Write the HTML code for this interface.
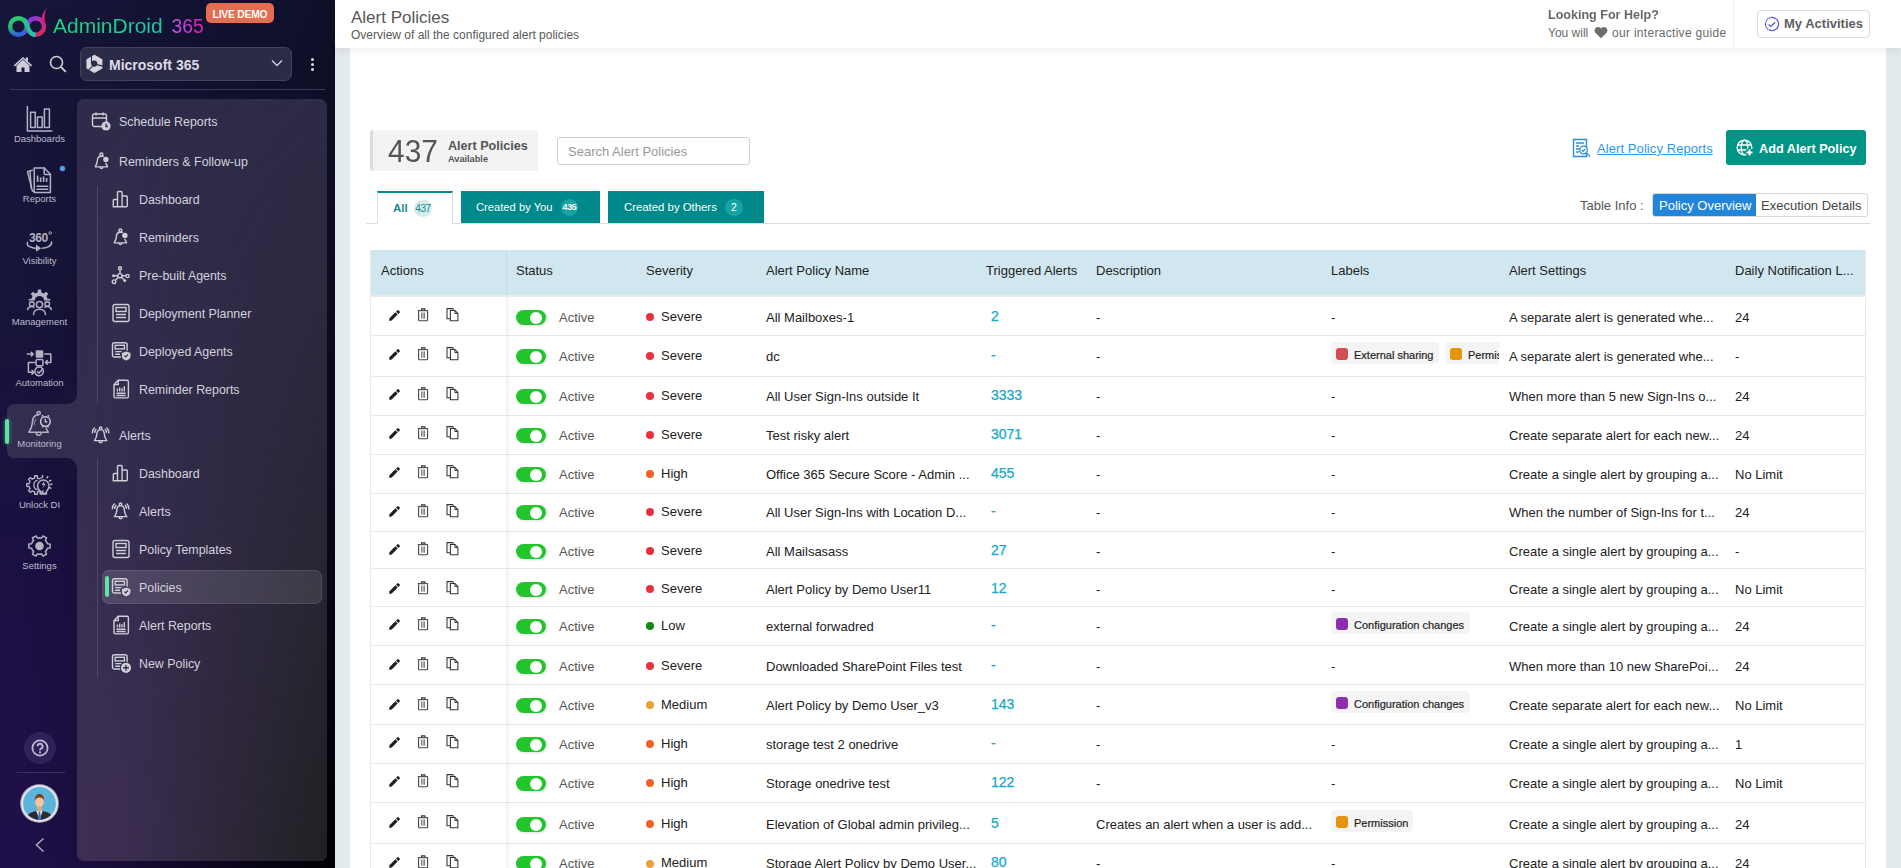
<!DOCTYPE html><html><head><meta charset="utf-8"><style>
*{box-sizing:border-box;margin:0;padding:0}
html,body{width:1901px;height:868px;overflow:hidden}
body{position:relative;font-family:"Liberation Sans",sans-serif;background:#e3eaee;color:#222}
.abs{position:absolute}
svg{display:block}
#side{position:absolute;left:0;top:0;width:335px;height:868px;overflow:hidden;
 background:linear-gradient(180deg,#15163a 0%,#171439 35%,#1b1042 65%,#20104a 100%)}
#sideshade{position:absolute;left:0;top:0;width:335px;height:868px;background:linear-gradient(90deg,rgba(0,0,0,0) 0%,rgba(0,0,0,0) 8%,rgba(0,0,0,.5) 60%,rgba(0,0,0,.97) 100%);
 -webkit-mask-image:linear-gradient(180deg,rgba(0,0,0,.3) 0%,rgba(0,0,0,.55) 50%,rgba(0,0,0,1) 100%);mask-image:linear-gradient(180deg,rgba(0,0,0,.3) 0%,rgba(0,0,0,.55) 50%,rgba(0,0,0,1) 100%)}
#panel{position:absolute;left:77px;top:99px;width:250px;height:762px;border-radius:7px;overflow:hidden;
 background:linear-gradient(180deg,#2f2c4b 0%,#362e52 50%,#3e2f56 100%)}
#panelshade{position:absolute;left:0;top:0;width:250px;height:762px;background:linear-gradient(90deg,rgba(32,32,33,0) 0%,rgba(32,32,33,.15) 25%,rgba(32,32,33,1) 100%);
 -webkit-mask-image:linear-gradient(180deg,rgba(0,0,0,.12) 0%,rgba(0,0,0,.55) 50%,rgba(0,0,0,1) 100%);mask-image:linear-gradient(180deg,rgba(0,0,0,.12) 0%,rgba(0,0,0,.55) 50%,rgba(0,0,0,1) 100%)}
.rl{position:absolute;width:77px;text-align:center;font-size:9.5px;line-height:11px;color:#bdbccb;white-space:nowrap}
.ri{position:absolute;display:flex;justify-content:center;width:77px}
.sm{position:absolute;font-size:12.4px;color:#d4d2de;white-space:nowrap;line-height:14px}
.si{position:absolute;width:20px;height:20px}
.hdr{position:absolute;left:335px;top:0;width:1566px;height:48px;background:#fff;border-bottom-left-radius:3px;box-shadow:0 3px 9px rgba(0,0,0,.065)}
#main{position:absolute;left:350px;top:48px;width:1536px;height:820px;background:#fff}
.row{position:absolute;left:370px;width:1496px;border-bottom:1px solid #e8e8e8;box-shadow:inset 1px 0 #e6ecee,inset -1px 0 #e6ecee;background:#fff}
.c{position:absolute;white-space:nowrap;font-size:13px;line-height:15px}
</style></head><body>
<div id="side"><div id="sideshade"></div><div id="panel"><div id="panelshade"></div></div><div class="abs" style="left:7px;top:404px;width:80px;height:54px;border-radius:7px 0 0 7px;background:#332d50"></div><div class="abs" style="left:67px;top:394px;width:10px;height:10px;background:#332d50"></div><div class="abs" style="left:57px;top:384px;width:20px;height:20px;border-radius:0 0 10px 0;background:#171339"></div><div class="abs" style="left:67px;top:458px;width:10px;height:10px;background:#332d50"></div><div class="abs" style="left:57px;top:458px;width:20px;height:20px;border-radius:0 10px 0 0;background:#181239"></div><div class="abs" style="left:5px;top:419px;width:4px;height:25px;border-radius:2px;background:#5fe3a1;box-shadow:0 0 4px rgba(95,227,161,.6)"></div><svg width="56" height="40" viewBox="0 0 56 40" class="abs" style="left:0;top:0">
<defs><linearGradient id="lg1" x1="0" y1="0" x2="0.3" y2="1"><stop offset="0" stop-color="#2fd06a"/><stop offset=".55" stop-color="#21b873"/><stop offset="1" stop-color="#3a62d8"/></linearGradient>
<linearGradient id="lg1b" x1="0" y1="0" x2="1" y2="0"><stop offset="0" stop-color="#22c48a"/><stop offset="1" stop-color="#1fc8b0"/></linearGradient>
<linearGradient id="lg2" x1="0" y1="0" x2="1" y2="1"><stop offset="0" stop-color="#7a3ee0"/><stop offset=".45" stop-color="#b02cb8"/><stop offset="1" stop-color="#e02a40"/></linearGradient></defs>
<circle cx="18.4" cy="26.5" r="8.3" fill="none" stroke="url(#lg1)" stroke-width="4.4"/>
<circle cx="35.7" cy="26.5" r="8.3" fill="none" stroke="url(#lg2)" stroke-width="4.4"/>
<path d="M23.6 19.2C26.8 21.5 27 26.5 29.2 30.6 30.8 33.4 32.8 34.8 35.7 34.8" fill="none" stroke="url(#lg1b)" stroke-width="4.2"/>
<path d="M40.8 21c1.2-5.5 2.6-9.8 5.8-12.9-1.8 3.8-2.3 8-1.6 14.5z" fill="#d41f70"/>
</svg><div class="abs" style="left:53px;top:13.5px;font-size:21px;line-height:24px;white-space:nowrap;background:linear-gradient(90deg,#1ed47a,#1dcaa2);-webkit-background-clip:text;background-clip:text;color:transparent">AdminDroid</div><div class="abs" style="left:171.5px;top:15.5px;font-size:19.3px;line-height:22px;white-space:nowrap;background:linear-gradient(90deg,#b060f0,#e81ab0);-webkit-background-clip:text;background-clip:text;color:transparent">365</div><div class="abs" style="left:206px;top:3px;width:68px;height:20px;border-radius:5px;background:#e46c50;color:#fff;font-weight:bold;font-size:10.3px;line-height:24px;letter-spacing:-0.2px;text-align:center">LIVE DEMO</div><div class="abs" style="left:13px;top:56px"><svg width="20" height="17" viewBox="0 0 20 17" ><path d="M10 1L0.8 9.3l1 1.1L10 3l8.2 7.4 1-1.1L15 5.5V1.5h-2.2v2L10 1z" fill="#cfcdd8"/><path d="M3.5 9.5V16h5v-4.5h3V16h5V9.5L10 3.8z" fill="#cfcdd8"/></svg></div><div class="abs" style="left:49px;top:55px"><svg width="18" height="18" viewBox="0 0 18 18" ><circle cx="7.5" cy="7.5" r="6" fill="none" stroke="#cfcdd8" stroke-width="1.6"/><path d="M12 12l4.8 4.8" stroke="#cfcdd8" stroke-width="1.8"/></svg></div><div class="abs" style="left:80px;top:47px;width:212px;height:34px;border-radius:7px;background:#2c2b47;border:1px solid #44435e"></div><div class="abs" style="left:85px;top:54px"><svg width="19" height="20" viewBox="0 0 19 20" ><path d="M9.4 1.9L16.3 5.9V13.9L9.4 17.9 2.5 13.9V5.9z" fill="#d6d5de" stroke="#d6d5de" stroke-width="2.2" stroke-linejoin="round"/><circle cx="9.2" cy="9.6" r="3.1" fill="#2c2b47"/><path d="M6.5 9.2L6.5 0.5M11.6 10.6L19 12.4M7.6 12.2L3 16.6" stroke="#2c2b47" stroke-width="1.1"/></svg></div><div class="abs" style="left:109px;top:57px;font-size:14px;font-weight:bold;color:#dcdae4;line-height:17px">Microsoft 365</div><div class="abs" style="left:270px;top:58px"><svg width="14" height="10" viewBox="0 0 14 10" ><path d="M2 2.5l5 5 5-5" fill="none" stroke="#cfcdd8" stroke-width="1.5"/></svg></div><div class="abs" style="left:310.5px;top:57.5px;width:3.5px;height:3.5px;border-radius:2px;background:#dcdae4"></div><div class="abs" style="left:310.5px;top:62.5px;width:3.5px;height:3.5px;border-radius:2px;background:#dcdae4"></div><div class="abs" style="left:310.5px;top:67.5px;width:3.5px;height:3.5px;border-radius:2px;background:#dcdae4"></div><div class="abs" style="left:10px;top:89px;width:315px;height:1px;background:#3a3958"></div><svg class="abs" style="left:0;top:0" width="77" height="600" viewBox="0 0 77 600">
<g stroke="#b3b2c2" fill="none" stroke-width="1.5" stroke-linecap="round" stroke-linejoin="round">
<path d="M27.4 106.5V131H51.8"/>
<rect x="30.6" y="112.3" width="4.6" height="15.2"/><rect x="37.4" y="116.9" width="4.8" height="10.6"/><rect x="44.4" y="109.1" width="5" height="18.4"/>
<path d="M34.2 168h10l6.2 6.2V192.5H34.2z"/><path d="M44.2 168v5.6c0 .6.4 1 1 1h5.2"/>
<path d="M32.3 170.3l-4.8 1.3 4.9 19.5 1.8.5"/><path d="M30 171l1.2 17"/>
<path d="M37 186.2h10.8M37 189.2h10.8"/>
</g>
<path d="M36.8 175.5h1.6v6.4h-1.6zM39.8 177.5h1.6v4.4h-1.6zM42.8 176.5h1.6v5.4h-1.6zM45.8 178h1.6v3.9h-1.6z" fill="#b3b2c2"/>
<text x="29" y="241.8" font-family="Liberation Sans" font-weight="bold" font-size="12" fill="#b3b2c2" letter-spacing="-0.4">360</text>
<circle cx="50.2" cy="233" r="1.3" fill="none" stroke="#b3b2c2" stroke-width="0.9"/>
<path d="M27.6 242.5c-1.8 2.8 2.5 5.6 9.5 6" stroke="#b3b2c2" fill="none" stroke-width="1.5" stroke-linecap="round" stroke-linejoin="round" stroke-width="1.9"/>
<path d="M36 244.6l5.2 3.7-5.2 3.4z" fill="#b3b2c2"/>
<path d="M42.2 248.3c5.6-.4 9.8-2.6 9.4-6.3" stroke="#b3b2c2" fill="none" stroke-width="1.5" stroke-linecap="round" stroke-linejoin="round" stroke-width="1.9"/>
<path d="M47.14 297.51 L47.49 298.66 L50.38 298.89 L50.38 302.11 L47.49 302.34 L47.01 303.79 L46.45 304.85 L48.33 307.06 L46.06 309.33 L43.85 307.45 L42.49 308.14 L41.34 308.49 L41.11 311.38 L37.89 311.38 L37.66 308.49 L36.21 308.01 L35.15 307.45 L32.94 309.33 L30.67 307.06 L32.55 304.85 L31.86 303.49 L31.51 302.34 L28.62 302.11 L28.62 298.89 L31.51 298.66 L31.99 297.21 L32.55 296.15 L30.67 293.94 L32.94 291.67 L35.15 293.55 L36.51 292.86 L37.66 292.51 L37.89 289.62 L41.11 289.62 L41.34 292.51 L42.79 292.99 L43.85 293.55 L46.06 291.67 L48.33 293.94 L46.45 296.15Z" fill="#b3b2c2"/>
<rect x="26" y="300.5" width="27" height="16" fill="#171338"/>
<circle cx="39.5" cy="300.6" r="4.6" fill="#171338"/>
<g stroke="#b3b2c2" fill="none" stroke-width="1.5" stroke-linecap="round" stroke-linejoin="round">
<circle cx="39.5" cy="304.6" r="3.1"/><circle cx="31.8" cy="304" r="2.3"/><circle cx="47.2" cy="304" r="2.3"/>
<path d="M33.6 314.5c0-3.2 2.6-5.3 5.9-5.3s5.9 2.1 5.9 5.3"/>
<path d="M27.6 309.5c.6-2 2.3-3 4.2-3 .9 0 1.7.2 2.3.6M51.4 309.5c-.6-2-2.3-3-4.2-3-.9 0-1.7.2-2.3.6"/>
</g>
<rect x="35.7" y="350.3" width="7.6" height="7.4" rx="1.2" fill="#b3b2c2"/>
<g stroke="#b3b2c2" fill="none" stroke-width="1.5" stroke-linecap="round" stroke-linejoin="round">
<rect x="36.1" y="359.6" width="6.8" height="6.2" rx="1"/>
<path d="M27.3 354.1h5.8M31.3 352.3l1.9 1.8-1.9 1.8"/>
<path d="M44.8 354h6v8.4h-5M47.3 360.5l-1.9 1.9 1.9 1.9"/>
<path d="M35 362.5h-6.6v9.7h5M32 370.3l1.9 1.9-1.9 1.9"/>
<path d="M42.6 368.9a4.3 4.3 0 1 0 .6 1.2"/><path d="M37.4 371.5l1.6 1.6 3.8-4.2"/>
</g>
<g stroke="#b3b2c2" fill="none" stroke-width="1.5" stroke-linecap="round" stroke-linejoin="round" stroke="#d4d2de" stroke-width="1.4">
<circle cx="38.7" cy="413" r="1.6"/>
<path d="M38.7 414.8c-3.6 0-6.1 2.9-6.3 7.6-.2 4.6-1.6 7.2-3.5 9.9h19.4c-.9-1.3-1.7-2.6-2.2-4.4"/>
<path d="M36.2 432.8a2.5 2.5 0 0 0 5 0"/>
<path d="M34.3 424.5c.1-2.8.8-4.6 2-5.6" stroke-width="0.8"/>
</g>
<circle cx="45.4" cy="421.6" r="4.8" fill="#332d50" stroke="#d4d2de" stroke-width="1.4"/>
<path d="M45.3 418.8v3h2.1" fill="none" stroke="#d4d2de" stroke-width="1.2"/>
<path d="M41.6 416.6l1.4-1.4M49.2 416.6l-1.4-1.4M43.2 426.2l-.9 1.1M47.6 426.2l.9 1.1" stroke="#d4d2de" stroke-width="1.2"/>
<path d="M42.52 482.45 L42.84 483.51 L45.22 483.75 L45.22 486.25 L42.84 486.49 L42.41 487.81 L41.89 488.78 L43.40 490.63 L41.63 492.40 L39.78 490.89 L38.55 491.52 L37.49 491.84 L37.25 494.22 L34.75 494.22 L34.51 491.84 L33.19 491.41 L32.22 490.89 L30.37 492.40 L28.60 490.63 L30.11 488.78 L29.48 487.55 L29.16 486.49 L26.78 486.25 L26.78 483.75 L29.16 483.51 L29.59 482.19 L30.11 481.22 L28.60 479.37 L30.37 477.60 L32.22 479.11 L33.45 478.48 L34.51 478.16 L34.75 475.78 L37.25 475.78 L37.49 478.16 L38.81 478.59 L39.78 479.11 L41.63 477.60 L43.40 479.37 L41.89 481.22Z" fill="none" stroke="#b3b2c2" stroke-width="1.4"/>
<path d="M37.5 480.2a5 5 0 0 0 0 9.6" fill="none" stroke="#b3b2c2" stroke-width="1.3"/>
<circle cx="43.3" cy="484.2" r="6.3" fill="#171338"/>
<g stroke="#b3b2c2" fill="none" stroke-width="1.5" stroke-linecap="round" stroke-linejoin="round" stroke-width="1.4">
<path d="M40.2 491.5c-1.5-1.5-2.7-3.3-2.7-5.7a5.8 5.8 0 0 1 11.6 0c0 2.4-1.2 4.2-2.7 5.7v2.5h-6.2z"/>
<path d="M40.5 493.2h5.6"/>
<path d="M42.6 475.4v1.6M47.8 476.6l-.8 1.3M50.9 480.3l-1.4.7M52 484.3h-1.5M50.8 488.2l-1.3-.6"/>
</g>
<path d="M44.5 480.5l-3 4.2h2.2l-1.2 3.6 3.4-4.5h-2.2z" fill="#b3b2c2"/>
<path d="M46.68 542.04 L47.40 543.81 L50.11 543.96 L50.11 548.04 L47.40 548.19 L46.52 550.24 L45.35 551.75 L46.57 554.17 L43.04 556.20 L41.56 553.94 L39.34 554.20 L37.44 553.94 L35.96 556.20 L32.43 554.17 L33.65 551.75 L32.32 549.96 L31.60 548.19 L28.89 548.04 L28.89 543.96 L31.60 543.81 L32.48 541.76 L33.65 540.25 L32.43 537.83 L35.96 535.80 L37.44 538.06 L39.66 537.80 L41.56 538.06 L43.04 535.80 L46.57 537.83 L45.35 540.25Z" fill="none" stroke="#b3b2c2" stroke-width="1.5" stroke-linejoin="round"/>
<circle cx="39.5" cy="546" r="4.3" fill="#b3b2c2"/>
</svg><div class="rl" style="left:1px;top:132.6px">Dashboards</div><div class="rl" style="left:1px;top:193.3px">Reports</div><div class="rl" style="left:1px;top:254.6px">Visibility</div><div class="rl" style="left:1px;top:315.8px">Management</div><div class="rl" style="left:1px;top:376.9px">Automation</div><div class="rl" style="left:1px;top:437.7px">Monitoring</div><div class="rl" style="left:1px;top:498.9px">Unlock DI</div><div class="rl" style="left:1px;top:559.9px">Settings</div><div class="abs" style="left:60px;top:166px;width:5px;height:5px;border-radius:3px;background:#5aa0e8;box-shadow:0 0 2px rgba(90,160,232,.6)"></div><div class="abs" style="left:24px;top:731.5px;width:32px;height:32px;border-radius:16px;background:rgba(120,100,170,.22)"></div><div class="abs" style="left:31px;top:739px"><svg width="18" height="18" viewBox="0 0 18 18" ><circle cx="9" cy="9" r="7.6" fill="none" stroke="#bdb9cc" stroke-width="1.7"/><path d="M6.6 7.3a2.5 2.5 0 1 1 3.6 2.2c-.8.4-1.2.8-1.2 1.7" fill="none" stroke="#bdb9cc" stroke-width="1.9"/><circle cx="9" cy="13.3" r="1.1" fill="#bdb9cc"/></svg></div><div class="abs" style="left:15px;top:772px;width:50px;height:1px;background:#3a2f5c"></div><div class="abs" style="left:20px;top:784px"><svg width="39" height="39" viewBox="0 0 39 39" ><circle cx="19.5" cy="19.5" r="19.3" fill="#b9b6c4"/><circle cx="19.5" cy="19.5" r="18.2" fill="#e6e4ec"/><circle cx="19.5" cy="19.5" r="16.4" fill="#5db4da"/>
<clipPath id="av"><circle cx="19.5" cy="19.5" r="16.4"/></clipPath><g clip-path="url(#av)">
<path d="M5.5 40c0-8 2.5-12.5 14-13.3 11.5.8 14 5.3 14 13.3z" fill="#2b2a30"/>
<path d="M16.3 26.8l3.2 9.5 3.2-9.5z" fill="#eef0f6"/>
<path d="M18.7 27.6l-.9 9h3.4l-.9-9z" fill="#3f73c0"/>
<rect x="17.3" y="21" width="4.4" height="6.2" fill="#e3a77a"/>
<ellipse cx="19.5" cy="17.6" rx="4.4" ry="5.4" fill="#f3c49a"/>
<path d="M15 16.8c-.3-4.6 1.5-6.8 4.5-6.8s4.8 2.2 4.5 6.8c-.6-1.9-1.6-3.3-4.5-3.3s-3.9 1.4-4.5 3.3z" fill="#7a3f1c"/></g></svg></div><div class="abs" style="left:34px;top:837px"><svg width="11" height="16" viewBox="0 0 11 16" ><path d="M9.5 1.5L2.5 8l7 6.5" fill="none" stroke="#a9a5bb" stroke-width="1.6"/></svg></div><div class="abs" style="left:97px;top:186px;width:1px;height:217px;background:#4c4866"></div><div class="abs" style="left:97px;top:459px;width:1px;height:218px;background:#4c4866"></div><div class="abs" style="left:102px;top:570px;width:220px;height:34px;border-radius:7px;background:linear-gradient(90deg,rgba(255,255,255,.13),rgba(255,255,255,.1));border:1px solid rgba(255,255,255,.09)"></div><div class="abs" style="left:105px;top:576px;width:4px;height:21px;border-radius:2px;background:#5fe3a1"></div><div class="si" style="left:91px;top:111px"><svg width="20" height="20" viewBox="0 0 20 20" ><rect x="1.5" y="3" width="14" height="12.5" rx="2" stroke="#cfcdd8" fill="none" stroke-width="1.4"/><path d="M1.5 7h14M5 1.5v3M12 1.5v3" stroke="#cfcdd8" fill="none" stroke-width="1.4"/><circle cx="15" cy="15" r="4.6" fill="#cfcdd8"/><path d="M15 12.5v3h2" stroke="#2f2b4b" stroke-width="1.3" fill="none"/></svg></div><div class="sm" style="left:119px;top:115px">Schedule Reports</div><div class="si" style="left:92px;top:151px"><svg width="20" height="20" viewBox="0 0 20 20" ><circle cx="9.4" cy="3.5" r="1.5" stroke="#cfcdd8" fill="none" stroke-width="1.4"/><path d="M9.4 5.2C6.9 5.2 5.4 7.2 5.3 10 5.2 12.6 4.3 14 3.4 15.3Q3 15.9 3.7 15.9H15.1Q15.8 15.9 15.4 15.3C14.5 14 13.6 12.6 13.5 10 13.4 7.2 11.9 5.2 9.4 5.2z" stroke="#cfcdd8" fill="none" stroke-width="1.4"/><path d="M7.8 16.2a1.7 1.7 0 0 0 3.3 0" stroke="#cfcdd8" fill="none" stroke-width="1.4"/><circle cx="13.9" cy="8.5" r="3.5" fill="#302c4c"/><circle cx="13.9" cy="8.5" r="2.7" fill="#cfcdd8"/></svg></div><div class="sm" style="left:119px;top:155px">Reminders &amp; Follow-up</div><div class="si" style="left:111px;top:189px"><svg width="20" height="20" viewBox="0 0 20 20" ><path d="M2.3 17.8V11.5c0-.6.4-1 1-1h3.2v7.3zM6.5 17.8V3.5c0-.6.4-1 1-1h2.6c.6 0 1 .4 1 1v14.3zM11.1 17.8V8c0-.6.4-1 1-1h3.2c.6 0 1 .4 1 1v8.8c0 .6-.4 1-1 1H3.3" stroke="#cfcdd8" fill="none" stroke-width="1.4"/></svg></div><div class="sm" style="left:139px;top:193px">Dashboard</div><div class="si" style="left:111px;top:227px"><svg width="20" height="20" viewBox="0 0 20 20" ><circle cx="9.4" cy="3.5" r="1.5" stroke="#cfcdd8" fill="none" stroke-width="1.4"/><path d="M9.4 5.2C6.9 5.2 5.4 7.2 5.3 10 5.2 12.6 4.3 14 3.4 15.3Q3 15.9 3.7 15.9H15.1Q15.8 15.9 15.4 15.3C14.5 14 13.6 12.6 13.5 10 13.4 7.2 11.9 5.2 9.4 5.2z" stroke="#cfcdd8" fill="none" stroke-width="1.4"/><path d="M7.8 16.2a1.7 1.7 0 0 0 3.3 0" stroke="#cfcdd8" fill="none" stroke-width="1.4"/><circle cx="13.9" cy="8.5" r="3.5" fill="#302c4c"/><circle cx="13.9" cy="8.5" r="2.7" fill="#cfcdd8"/></svg></div><div class="sm" style="left:139px;top:231px">Reminders</div><div class="si" style="left:111px;top:265px"><svg width="20" height="20" viewBox="0 0 20 20" ><circle cx="8.9" cy="10.7" r="2.1" stroke="#cfcdd8" fill="none" stroke-width="1.4" stroke-width="1.6"/><circle cx="9" cy="3.2" r="1.5" stroke="#cfcdd8" fill="none" stroke-width="1.4"/><circle cx="2.6" cy="10.7" r="1.5" fill="#cfcdd8"/><circle cx="16.5" cy="11" r="1.6" stroke="#cfcdd8" fill="none" stroke-width="1.4"/><circle cx="3" cy="16.7" r="1.8" stroke="#cfcdd8" fill="none" stroke-width="1.4"/><circle cx="13.7" cy="15.5" r="1.5" fill="#cfcdd8"/><path d="M9 4.7v3.9M4.1 10.7h2.7M11 10.8h3.9M4.3 15.4l3-3.2M10.4 12.3l2.3 2.2" stroke="#cfcdd8" fill="none" stroke-width="1.4"/></svg></div><div class="sm" style="left:139px;top:269px">Pre-built Agents</div><div class="si" style="left:111px;top:303px"><svg width="20" height="20" viewBox="0 0 20 20" ><rect x="2" y="1.5" width="16" height="17" rx="2" stroke="#cfcdd8" fill="none" stroke-width="1.4"/><rect x="5" y="4.5" width="10" height="4" stroke="#cfcdd8" fill="none" stroke-width="1.4"/><path d="M5 11.5h10M5 14.5h10" stroke="#cfcdd8" fill="none" stroke-width="1.4"/></svg></div><div class="sm" style="left:139px;top:307px">Deployment Planner</div><div class="si" style="left:111px;top:341px"><svg width="20" height="20" viewBox="0 0 20 20" ><rect x="1.5" y="1.8" width="14.6" height="14.2" rx="2" stroke="#cfcdd8" fill="none" stroke-width="1.4"/><rect x="4.2" y="4.3" width="9.2" height="3.6" stroke="#cfcdd8" fill="none" stroke-width="1.4" stroke-width="1.3"/><path d="M4.2 10.6h6.3M4.2 13.2h4.8" stroke="#cfcdd8" fill="none" stroke-width="1.4" stroke-width="1.3"/><path d="M15.2 9.3l5.4 1.9v3.7c0 3-2.4 4.7-5.4 5.4-3-.7-5.4-2.4-5.4-5.4v-3.7z" fill="#3a3450"/><path d="M15.2 10.5l4.3 1.5v3c0 2.5-1.9 3.8-4.3 4.4-2.4-.6-4.3-1.9-4.3-4.4v-3z" fill="#cfcdd8"/><path d="M13.4 14.6l1.3 1.3 2.3-2.4" stroke="#3a3450" stroke-width="1.2" fill="none"/></svg></div><div class="sm" style="left:139px;top:345px">Deployed Agents</div><div class="si" style="left:111px;top:379px"><svg width="20" height="20" viewBox="0 0 20 20" ><path d="M7.2 1.3h8.8c.8 0 1.4.6 1.4 1.4v14.8c0 .8-.6 1.4-1.4 1.4H4.4c-.8 0-1.4-.6-1.4-1.4V5.5z" stroke="#cfcdd8" fill="none" stroke-width="1.4"/><path d="M7.2 1.3v4.2H3" stroke="#cfcdd8" fill="none" stroke-width="1.4" stroke-width="1.2"/><path d="M5.7 9.5h1.4v3H5.7zM8 8.5h1.4v4H8zM10.3 9.2h1.4v3.3h-1.4zM12.6 7.3H14v5.2h-1.4z" fill="#cfcdd8"/><path d="M5.4 14.3h9.2M5.4 16.5h9.2" stroke="#cfcdd8" fill="none" stroke-width="1.4" stroke-width="1.2"/></svg></div><div class="sm" style="left:139px;top:383px">Reminder Reports</div><div class="si" style="left:91px;top:425px"><svg width="20" height="20" viewBox="0 0 20 20" ><circle cx="9.6" cy="3.3" r="1.3" stroke="#cfcdd8" fill="none" stroke-width="1.4" stroke-width="1.2"/><path d="M9.6 4.6C7 4.6 5.9 6.8 5.8 9.6 5.7 12.5 4.6 14 3.6 15.6H15.6C14.6 14 13.5 12.5 13.4 9.6 13.3 6.8 12.2 4.6 9.6 4.6z" stroke="#cfcdd8" fill="none" stroke-width="1.4"/><path d="M8 16.1a1.6 1.6 0 0 0 3.2 0" stroke="#cfcdd8" fill="none" stroke-width="1.4"/><path d="M3.7 2.6C2 4.1 1.2 6 1.3 8.4M5.3 3.9C4.2 5 3.7 6.3 3.8 7.9M15.5 2.6c1.7 1.5 2.5 3.4 2.4 5.8M13.9 3.9c1.1 1.1 1.6 2.4 1.5 4" stroke="#cfcdd8" fill="none" stroke-width="1.4" stroke-width="1.2"/></svg></div><div class="sm" style="left:119px;top:429px">Alerts</div><div class="si" style="left:111px;top:463px"><svg width="20" height="20" viewBox="0 0 20 20" ><path d="M2.3 17.8V11.5c0-.6.4-1 1-1h3.2v7.3zM6.5 17.8V3.5c0-.6.4-1 1-1h2.6c.6 0 1 .4 1 1v14.3zM11.1 17.8V8c0-.6.4-1 1-1h3.2c.6 0 1 .4 1 1v8.8c0 .6-.4 1-1 1H3.3" stroke="#cfcdd8" fill="none" stroke-width="1.4"/></svg></div><div class="sm" style="left:139px;top:467px">Dashboard</div><div class="si" style="left:111px;top:501px"><svg width="20" height="20" viewBox="0 0 20 20" ><circle cx="9.6" cy="3.3" r="1.3" stroke="#cfcdd8" fill="none" stroke-width="1.4" stroke-width="1.2"/><path d="M9.6 4.6C7 4.6 5.9 6.8 5.8 9.6 5.7 12.5 4.6 14 3.6 15.6H15.6C14.6 14 13.5 12.5 13.4 9.6 13.3 6.8 12.2 4.6 9.6 4.6z" stroke="#cfcdd8" fill="none" stroke-width="1.4"/><path d="M8 16.1a1.6 1.6 0 0 0 3.2 0" stroke="#cfcdd8" fill="none" stroke-width="1.4"/><path d="M3.7 2.6C2 4.1 1.2 6 1.3 8.4M5.3 3.9C4.2 5 3.7 6.3 3.8 7.9M15.5 2.6c1.7 1.5 2.5 3.4 2.4 5.8M13.9 3.9c1.1 1.1 1.6 2.4 1.5 4" stroke="#cfcdd8" fill="none" stroke-width="1.4" stroke-width="1.2"/></svg></div><div class="sm" style="left:139px;top:505px">Alerts</div><div class="si" style="left:111px;top:539px"><svg width="20" height="20" viewBox="0 0 20 20" ><rect x="2" y="1.5" width="16" height="17" rx="2" stroke="#cfcdd8" fill="none" stroke-width="1.4"/><rect x="5" y="4.5" width="10" height="4" stroke="#cfcdd8" fill="none" stroke-width="1.4"/><path d="M5 11.5h10M5 14.5h10" stroke="#cfcdd8" fill="none" stroke-width="1.4"/></svg></div><div class="sm" style="left:139px;top:543px">Policy Templates</div><div class="si" style="left:111px;top:577px"><svg width="20" height="20" viewBox="0 0 20 20" ><rect x="1.5" y="1.8" width="14.6" height="14.2" rx="2" stroke="#cfcdd8" fill="none" stroke-width="1.4"/><rect x="4.2" y="4.3" width="9.2" height="3.6" stroke="#cfcdd8" fill="none" stroke-width="1.4" stroke-width="1.3"/><path d="M4.2 10.6h6.3M4.2 13.2h4.8" stroke="#cfcdd8" fill="none" stroke-width="1.4" stroke-width="1.3"/><path d="M15.2 9.3l5.4 1.9v3.7c0 3-2.4 4.7-5.4 5.4-3-.7-5.4-2.4-5.4-5.4v-3.7z" fill="#3a3450"/><path d="M15.2 10.5l4.3 1.5v3c0 2.5-1.9 3.8-4.3 4.4-2.4-.6-4.3-1.9-4.3-4.4v-3z" fill="#cfcdd8"/><path d="M13.4 14.6l1.3 1.3 2.3-2.4" stroke="#3a3450" stroke-width="1.2" fill="none"/></svg></div><div class="sm" style="left:139px;top:581px">Policies</div><div class="si" style="left:111px;top:615px"><svg width="20" height="20" viewBox="0 0 20 20" ><path d="M7.2 1.3h8.8c.8 0 1.4.6 1.4 1.4v14.8c0 .8-.6 1.4-1.4 1.4H4.4c-.8 0-1.4-.6-1.4-1.4V5.5z" stroke="#cfcdd8" fill="none" stroke-width="1.4"/><path d="M7.2 1.3v4.2H3" stroke="#cfcdd8" fill="none" stroke-width="1.4" stroke-width="1.2"/><path d="M5.7 9.5h1.4v3H5.7zM8 8.5h1.4v4H8zM10.3 9.2h1.4v3.3h-1.4zM12.6 7.3H14v5.2h-1.4z" fill="#cfcdd8"/><path d="M5.4 14.3h9.2M5.4 16.5h9.2" stroke="#cfcdd8" fill="none" stroke-width="1.4" stroke-width="1.2"/></svg></div><div class="sm" style="left:139px;top:619px">Alert Reports</div><div class="si" style="left:111px;top:653px"><svg width="20" height="20" viewBox="0 0 20 20" ><rect x="1.5" y="1.8" width="14.6" height="14.2" rx="2" stroke="#cfcdd8" fill="none" stroke-width="1.4"/><rect x="4.2" y="4.3" width="9.2" height="3.6" stroke="#cfcdd8" fill="none" stroke-width="1.4" stroke-width="1.3"/><path d="M4.2 10.6h6.3M4.2 13.2h4.8" stroke="#cfcdd8" fill="none" stroke-width="1.4" stroke-width="1.3"/><circle cx="15" cy="14.8" r="6.1" fill="#332c4c"/><circle cx="15" cy="14.8" r="5.1" fill="#cfcdd8"/><path d="M15 11.9v5.8M12.1 14.8h5.8" stroke="#332c4c" stroke-width="1.4"/></svg></div><div class="sm" style="left:139px;top:657px">New Policy</div></div><div id="main"></div><div class="hdr"></div><div class="abs" style="left:351px;top:8px;font-size:17px;line-height:20px;color:#585858;white-space:nowrap">Alert Policies</div><div class="abs" style="left:351px;top:28px;font-size:12px;line-height:14px;color:#5a5a5a;white-space:nowrap">Overview of all the configured alert policies</div><div class="abs" style="left:1548px;top:7px;font-size:13px;font-weight:bold;line-height:16px;color:#676767;white-space:nowrap;transform-origin:0 0;transform:scaleX(0.965)">Looking For Help?</div><div class="abs" style="left:1548px;top:26px;font-size:12px;line-height:14px;color:#6a6a6a;white-space:nowrap">You will</div><div class="abs" style="left:1594px;top:26px"><svg width="14" height="13" viewBox="0 0 14 13" ><path d="M7 12.3L1.6 6.9C.2 5.5.2 3.2 1.6 1.9 3 .5 5.3.6 6.6 2L7 2.4l.4-.4c1.3-1.4 3.6-1.5 5-.1 1.4 1.3 1.4 3.6 0 5z" fill="#6e6e6e"/></svg></div><div class="abs" style="left:1612px;top:26px;font-size:12px;line-height:14px;color:#6a6a6a;white-space:nowrap;letter-spacing:0.3px">our interactive guide</div><div class="abs" style="left:1733px;top:0;width:1px;height:48px;background:#eeeeee"></div><div class="abs" style="left:1757px;top:10px;width:113px;height:28px;border:1px solid #dcdcdc;border-radius:4px;background:#fff"></div><div class="abs" style="left:1764px;top:16px"><svg width="16" height="16" viewBox="0 0 16 16" ><path d="M6.85 1.5A6.6 6.6 0 1 1 5.74 14.2" fill="none" stroke="#5757ea" stroke-width="1.3"/><path d="M5.74 14.2A6.6 6.6 0 0 1 6.85 1.5" fill="none" stroke="#5757ea" stroke-width="1.3" stroke-dasharray="0.6 1.6" stroke-linecap="round"/><path d="M4.6 8.4l2.2 2 4.4-4.2" fill="none" stroke="#5757ea" stroke-width="1.3"/></svg></div><div class="abs" style="left:1784px;top:16px;font-size:13px;font-weight:bold;line-height:15px;color:#5e5e5e;white-space:nowrap">My Activities</div><div class="abs" style="left:370px;top:130px;width:168px;height:41px;background:#f3f3f3;border-left:3px solid #dcdcdc;border-radius:3px"></div><div class="abs" style="left:388px;top:133px;font-size:32px;line-height:36px;color:#555;white-space:nowrap;transform-origin:0 0;transform:scaleX(0.935)">437</div><div class="abs" style="left:448px;top:139px;font-size:12.6px;font-weight:bold;line-height:15px;color:#555;white-space:nowrap">Alert Policies</div><div class="abs" style="left:448px;top:154px;font-size:9.2px;font-weight:bold;line-height:11px;color:#555;white-space:nowrap">Available</div><div class="abs" style="left:557px;top:137px;width:193px;height:28px;border:1px solid #cfcfcf;border-radius:3px;background:#fff"></div><div class="abs" style="left:568px;top:144px;font-size:13px;line-height:15px;color:#999;white-space:nowrap">Search Alert Policies</div><div class="abs" style="left:1572px;top:138px"><svg width="20" height="20" viewBox="0 0 20 20" ><path d="M1.5 1.5h13v17h-13z" fill="none" stroke="#2a8fd8" stroke-width="1.4"/><path d="M4 5h8M4 8h3M4 11h3M4 14h3" stroke="#2a8fd8" stroke-width="1.3"/><circle cx="11.5" cy="12" r="3.8" fill="#fff" stroke="#2a8fd8" stroke-width="1.3"/><path d="M10 12l1.2 1.2 2-2.2M14.2 14.8l3.8 3.8" fill="none" stroke="#2a8fd8" stroke-width="1.3"/></svg></div><div class="abs" style="left:1597px;top:141px;font-size:13px;line-height:15px;color:#2c98ec;white-space:nowrap;text-decoration:underline;letter-spacing:.08px">Alert Policy Reports</div><div class="abs" style="left:1726px;top:130px;width:140px;height:35px;border-radius:3px;background:#009484"></div><div class="abs" style="left:1736px;top:139px"><svg width="18" height="18" viewBox="0 0 18 18" ><circle cx="8.5" cy="8.5" r="7.3" fill="none" stroke="#fff" stroke-width="1.4"/><ellipse cx="8.5" cy="8.5" rx="3.3" ry="7.3" fill="none" stroke="#fff" stroke-width="1.3"/><path d="M1.5 6h14M1.5 11h14" stroke="#fff" stroke-width="1.3"/><circle cx="13.5" cy="13.5" r="4" fill="#009484"/><path d="M13.5 10.5v6M10.5 13.5h6" stroke="#fff" stroke-width="1.8"/></svg></div><div class="abs" style="left:1759px;top:142px;font-size:12.7px;font-weight:bold;line-height:15px;color:#fff;white-space:nowrap">Add Alert Policy</div><div class="abs" style="left:366px;top:223px;width:1505px;height:1px;background:#dddddd"></div><div class="abs" style="left:377px;top:191px;width:76px;height:33px;background:#fff;border:1px solid #dddddd;border-bottom:none;border-top:2px solid #00898a"></div><div class="abs" style="left:393px;top:201px;font-size:11.5px;font-weight:bold;line-height:14px;color:#1a8a8c;white-space:nowrap">All</div><div class="abs" style="left:414px;top:200px;width:18px;height:17px;border-radius:9px;background:#d5ecec;color:#1a8a8c;font-size:10px;letter-spacing:-0.4px;line-height:18px;text-align:center">437</div><div class="abs" style="left:461px;top:191px;width:139px;height:32px;background:#00898a"></div><div class="abs" style="left:476px;top:200px;font-size:11.2px;line-height:14px;color:#fff;white-space:nowrap">Created by You</div><div class="abs" style="left:561px;top:199px;width:17px;height:17px;border-radius:9px;background:#1aa3a3;color:#fff;font-size:9px;font-weight:bold;letter-spacing:-0.3px;line-height:17px;text-align:center">435</div><div class="abs" style="left:608px;top:191px;width:156px;height:32px;background:#00898a"></div><div class="abs" style="left:624px;top:200px;font-size:11.37px;line-height:14px;color:#fff;white-space:nowrap">Created by Others</div><div class="abs" style="left:725px;top:199px;width:18px;height:17px;border-radius:9px;background:#17a3a3;color:#fff;font-size:10.5px;line-height:17px;text-align:center">2</div><div class="abs" style="left:1580px;top:198px;font-size:13px;line-height:15px;color:#555;white-space:nowrap">Table Info :</div><div class="abs" style="left:1652px;top:193px;width:216px;height:24px;border:1px solid #d8d8d8;border-radius:3px;background:#fff"></div><div class="abs" style="left:1653px;top:194px;width:103px;height:22px;background:#2186d9;border-radius:2px 0 0 2px"></div><div class="abs" style="left:1659px;top:198px;font-size:13px;line-height:15px;color:#fff;white-space:nowrap">Policy Overview</div><div class="abs" style="left:1761px;top:198px;font-size:13px;line-height:15px;color:#444;white-space:nowrap">Execution Details</div><div class="abs" style="left:370px;top:250px;width:1496px;height:45px;background:#d0e7ef;box-shadow:inset 1px 0 #e6ecee,inset -1px 0 #e6ecee"></div><div class="abs" style="left:370px;top:295px;width:1495px;height:2px;background:#eaeaea"></div><div class="abs" style="left:506px;top:250px;width:1px;height:45px;background:#c4dce4"></div><div class="c" style="left:381px;top:263px;color:#222">Actions</div><div class="c" style="left:516px;top:263px;color:#222">Status</div><div class="c" style="left:646px;top:263px;color:#222">Severity</div><div class="c" style="left:766px;top:263px;color:#222">Alert Policy Name</div><div class="c" style="left:986px;top:263px;color:#222">Triggered Alerts</div><div class="c" style="left:1096px;top:263px;color:#222">Description</div><div class="c" style="left:1331px;top:263px;color:#222">Labels</div><div class="c" style="left:1509px;top:263px;color:#222">Alert Settings</div><div class="c" style="left:1735px;top:263px;color:#222">Daily Notification L...</div><div class="row" style="top:297px;height:39px"><div class="abs" style="left:136px;top:0;width:1px;height:39px;background:#efefef"></div><div class="abs" style="left:137px;top:0;width:5px;height:39px;background:linear-gradient(90deg,rgba(0,0,0,.035),rgba(0,0,0,0))"></div><div class="abs" style="left:19px;top:13px"><svg width="12" height="12" viewBox="0 0 12 12" ><path d="M0.3 10.9L2.7 10.56 8.64 4.62 6.38 2.36 0.44 8.3z" fill="#1e1e1e"/><path d="M9.35 3.91L11.19 2.07 8.93-0.19 7.09 1.65z" fill="#1e1e1e"/></svg></div><div class="abs" style="left:47px;top:11px"><svg width="12" height="14" viewBox="0 0 12 14" ><path d="M4.6 2.2V0.9h3.3v1.3" fill="none" stroke="#333" stroke-width="1.1"/><path d="M0.7 2.6h10.4" stroke="#555" stroke-width="1.3"/><path d="M1.6 3.2v8.7c0 .5.4.9.9.9h7.2c.5 0 .9-.4.9-.9V3.2" fill="none" stroke="#444" stroke-width="1.1"/><path d="M4.6 4.5v6.2M6.1 4.5v6.2M7.6 4.5v6.2" stroke="#777" stroke-width="1"/></svg></div><div class="abs" style="left:76px;top:11px"><svg width="13" height="14" viewBox="0 0 13 14" ><path d="M4.3 10.7H1V0.6h5.7l1 1" fill="none" stroke="#333" stroke-width="1.05"/><path d="M4.4 2.4h4.5l3 3v7.4H4.4z" fill="#fff" stroke="#333" stroke-width="1.05"/><path d="M8.9 2.4v3.1h3" fill="none" stroke="#333" stroke-width="1"/></svg></div><div class="abs" style="left:146px;top:13px;width:30px;height:15px;border-radius:8px;background:#22c52c;box-shadow:1px 1px 3px rgba(0,0,0,.12)"></div><div class="abs" style="left:160px;top:14.5px;width:12px;height:12px;border-radius:6px;background:#fff"></div><div class="c" style="left:189px;top:13px;color:#555">Active</div><div class="abs" style="left:276px;top:16px;width:8px;height:8px;border-radius:4px;background:#e8303f"></div><div class="c" style="left:291px;top:12px;color:#222">Severe</div><div class="c" style="left:396px;top:13px;color:#222">All Mailboxes-1</div><div class="c" style="left:621px;top:11px;color:#14a8cc;font-size:14px;line-height:16px;-webkit-text-stroke:0.25px #14a8cc">2</div><div class="c" style="left:726px;top:13px;color:#222">-</div><div class="c" style="left:961px;top:13px;color:#222">-</div><div class="c" style="left:1139px;top:13px;color:#222">A separate alert is generated whe...</div><div class="c" style="left:1365px;top:13px;color:#222">24</div></div><div class="row" style="top:336px;height:41px"><div class="abs" style="left:136px;top:0;width:1px;height:41px;background:#efefef"></div><div class="abs" style="left:137px;top:0;width:5px;height:41px;background:linear-gradient(90deg,rgba(0,0,0,.035),rgba(0,0,0,0))"></div><div class="abs" style="left:19px;top:13px"><svg width="12" height="12" viewBox="0 0 12 12" ><path d="M0.3 10.9L2.7 10.56 8.64 4.62 6.38 2.36 0.44 8.3z" fill="#1e1e1e"/><path d="M9.35 3.91L11.19 2.07 8.93-0.19 7.09 1.65z" fill="#1e1e1e"/></svg></div><div class="abs" style="left:47px;top:11px"><svg width="12" height="14" viewBox="0 0 12 14" ><path d="M4.6 2.2V0.9h3.3v1.3" fill="none" stroke="#333" stroke-width="1.1"/><path d="M0.7 2.6h10.4" stroke="#555" stroke-width="1.3"/><path d="M1.6 3.2v8.7c0 .5.4.9.9.9h7.2c.5 0 .9-.4.9-.9V3.2" fill="none" stroke="#444" stroke-width="1.1"/><path d="M4.6 4.5v6.2M6.1 4.5v6.2M7.6 4.5v6.2" stroke="#777" stroke-width="1"/></svg></div><div class="abs" style="left:76px;top:11px"><svg width="13" height="14" viewBox="0 0 13 14" ><path d="M4.3 10.7H1V0.6h5.7l1 1" fill="none" stroke="#333" stroke-width="1.05"/><path d="M4.4 2.4h4.5l3 3v7.4H4.4z" fill="#fff" stroke="#333" stroke-width="1.05"/><path d="M8.9 2.4v3.1h3" fill="none" stroke="#333" stroke-width="1"/></svg></div><div class="abs" style="left:146px;top:13px;width:30px;height:15px;border-radius:8px;background:#22c52c;box-shadow:1px 1px 3px rgba(0,0,0,.12)"></div><div class="abs" style="left:160px;top:14.5px;width:12px;height:12px;border-radius:6px;background:#fff"></div><div class="c" style="left:189px;top:13px;color:#555">Active</div><div class="abs" style="left:276px;top:16px;width:8px;height:8px;border-radius:4px;background:#e8303f"></div><div class="c" style="left:291px;top:12px;color:#222">Severe</div><div class="c" style="left:396px;top:13px;color:#222">dc</div><div class="c" style="left:621px;top:11px;color:#14a8cc;font-size:14px;line-height:16px;-webkit-text-stroke:0.25px #14a8cc">-</div><div class="c" style="left:726px;top:13px;color:#222">-</div><div class="abs" style="left:961px;top:6px;width:108px;height:22px;background:#f4f4f4;border-radius:4px"><div class="abs" style="left:5px;top:6px;width:12px;height:12px;border-radius:3px;background:#d14f52"></div><div class="c" style="left:23px;top:6.5px;font-size:11px;line-height:13px;color:#1e1e1e;-webkit-text-stroke:0.2px #1e1e1e">External sharing</div></div><div class="abs" style="left:1075px;top:6px;width:54px;height:22px;background:#f4f4f4;border-radius:4px 0 0 4px;overflow:hidden"><div class="abs" style="left:5px;top:6px;width:12px;height:12px;border-radius:3px;background:#e5940f"></div><div class="c" style="left:23px;top:6.5px;font-size:11px;line-height:13px;color:#1e1e1e;-webkit-text-stroke:0.2px #1e1e1e">Permission</div></div><div class="c" style="left:1139px;top:13px;color:#222">A separate alert is generated whe...</div><div class="c" style="left:1365px;top:13px;color:#222">-</div></div><div class="row" style="top:377px;height:39px"><div class="abs" style="left:136px;top:0;width:1px;height:39px;background:#efefef"></div><div class="abs" style="left:137px;top:0;width:5px;height:39px;background:linear-gradient(90deg,rgba(0,0,0,.035),rgba(0,0,0,0))"></div><div class="abs" style="left:19px;top:12px"><svg width="12" height="12" viewBox="0 0 12 12" ><path d="M0.3 10.9L2.7 10.56 8.64 4.62 6.38 2.36 0.44 8.3z" fill="#1e1e1e"/><path d="M9.35 3.91L11.19 2.07 8.93-0.19 7.09 1.65z" fill="#1e1e1e"/></svg></div><div class="abs" style="left:47px;top:10px"><svg width="12" height="14" viewBox="0 0 12 14" ><path d="M4.6 2.2V0.9h3.3v1.3" fill="none" stroke="#333" stroke-width="1.1"/><path d="M0.7 2.6h10.4" stroke="#555" stroke-width="1.3"/><path d="M1.6 3.2v8.7c0 .5.4.9.9.9h7.2c.5 0 .9-.4.9-.9V3.2" fill="none" stroke="#444" stroke-width="1.1"/><path d="M4.6 4.5v6.2M6.1 4.5v6.2M7.6 4.5v6.2" stroke="#777" stroke-width="1"/></svg></div><div class="abs" style="left:76px;top:10px"><svg width="13" height="14" viewBox="0 0 13 14" ><path d="M4.3 10.7H1V0.6h5.7l1 1" fill="none" stroke="#333" stroke-width="1.05"/><path d="M4.4 2.4h4.5l3 3v7.4H4.4z" fill="#fff" stroke="#333" stroke-width="1.05"/><path d="M8.9 2.4v3.1h3" fill="none" stroke="#333" stroke-width="1"/></svg></div><div class="abs" style="left:146px;top:12px;width:30px;height:15px;border-radius:8px;background:#22c52c;box-shadow:1px 1px 3px rgba(0,0,0,.12)"></div><div class="abs" style="left:160px;top:13.5px;width:12px;height:12px;border-radius:6px;background:#fff"></div><div class="c" style="left:189px;top:12px;color:#555">Active</div><div class="abs" style="left:276px;top:15px;width:8px;height:8px;border-radius:4px;background:#e8303f"></div><div class="c" style="left:291px;top:11px;color:#222">Severe</div><div class="c" style="left:396px;top:12px;color:#222">All User Sign-Ins outside It</div><div class="c" style="left:621px;top:10px;color:#14a8cc;font-size:14px;line-height:16px;-webkit-text-stroke:0.25px #14a8cc">3333</div><div class="c" style="left:726px;top:12px;color:#222">-</div><div class="c" style="left:961px;top:12px;color:#222">-</div><div class="c" style="left:1139px;top:12px;color:#222">When more than 5 new Sign-Ins o...</div><div class="c" style="left:1365px;top:12px;color:#222">24</div></div><div class="row" style="top:416px;height:39px"><div class="abs" style="left:136px;top:0;width:1px;height:39px;background:#efefef"></div><div class="abs" style="left:137px;top:0;width:5px;height:39px;background:linear-gradient(90deg,rgba(0,0,0,.035),rgba(0,0,0,0))"></div><div class="abs" style="left:19px;top:12px"><svg width="12" height="12" viewBox="0 0 12 12" ><path d="M0.3 10.9L2.7 10.56 8.64 4.62 6.38 2.36 0.44 8.3z" fill="#1e1e1e"/><path d="M9.35 3.91L11.19 2.07 8.93-0.19 7.09 1.65z" fill="#1e1e1e"/></svg></div><div class="abs" style="left:47px;top:10px"><svg width="12" height="14" viewBox="0 0 12 14" ><path d="M4.6 2.2V0.9h3.3v1.3" fill="none" stroke="#333" stroke-width="1.1"/><path d="M0.7 2.6h10.4" stroke="#555" stroke-width="1.3"/><path d="M1.6 3.2v8.7c0 .5.4.9.9.9h7.2c.5 0 .9-.4.9-.9V3.2" fill="none" stroke="#444" stroke-width="1.1"/><path d="M4.6 4.5v6.2M6.1 4.5v6.2M7.6 4.5v6.2" stroke="#777" stroke-width="1"/></svg></div><div class="abs" style="left:76px;top:10px"><svg width="13" height="14" viewBox="0 0 13 14" ><path d="M4.3 10.7H1V0.6h5.7l1 1" fill="none" stroke="#333" stroke-width="1.05"/><path d="M4.4 2.4h4.5l3 3v7.4H4.4z" fill="#fff" stroke="#333" stroke-width="1.05"/><path d="M8.9 2.4v3.1h3" fill="none" stroke="#333" stroke-width="1"/></svg></div><div class="abs" style="left:146px;top:12px;width:30px;height:15px;border-radius:8px;background:#22c52c;box-shadow:1px 1px 3px rgba(0,0,0,.12)"></div><div class="abs" style="left:160px;top:13.5px;width:12px;height:12px;border-radius:6px;background:#fff"></div><div class="c" style="left:189px;top:12px;color:#555">Active</div><div class="abs" style="left:276px;top:15px;width:8px;height:8px;border-radius:4px;background:#e8303f"></div><div class="c" style="left:291px;top:11px;color:#222">Severe</div><div class="c" style="left:396px;top:12px;color:#222">Test risky alert</div><div class="c" style="left:621px;top:10px;color:#14a8cc;font-size:14px;line-height:16px;-webkit-text-stroke:0.25px #14a8cc">3071</div><div class="c" style="left:726px;top:12px;color:#222">-</div><div class="c" style="left:961px;top:12px;color:#222">-</div><div class="c" style="left:1139px;top:12px;color:#222">Create separate alert for each new...</div><div class="c" style="left:1365px;top:12px;color:#222">24</div></div><div class="row" style="top:455px;height:39px"><div class="abs" style="left:136px;top:0;width:1px;height:39px;background:#efefef"></div><div class="abs" style="left:137px;top:0;width:5px;height:39px;background:linear-gradient(90deg,rgba(0,0,0,.035),rgba(0,0,0,0))"></div><div class="abs" style="left:19px;top:12px"><svg width="12" height="12" viewBox="0 0 12 12" ><path d="M0.3 10.9L2.7 10.56 8.64 4.62 6.38 2.36 0.44 8.3z" fill="#1e1e1e"/><path d="M9.35 3.91L11.19 2.07 8.93-0.19 7.09 1.65z" fill="#1e1e1e"/></svg></div><div class="abs" style="left:47px;top:10px"><svg width="12" height="14" viewBox="0 0 12 14" ><path d="M4.6 2.2V0.9h3.3v1.3" fill="none" stroke="#333" stroke-width="1.1"/><path d="M0.7 2.6h10.4" stroke="#555" stroke-width="1.3"/><path d="M1.6 3.2v8.7c0 .5.4.9.9.9h7.2c.5 0 .9-.4.9-.9V3.2" fill="none" stroke="#444" stroke-width="1.1"/><path d="M4.6 4.5v6.2M6.1 4.5v6.2M7.6 4.5v6.2" stroke="#777" stroke-width="1"/></svg></div><div class="abs" style="left:76px;top:10px"><svg width="13" height="14" viewBox="0 0 13 14" ><path d="M4.3 10.7H1V0.6h5.7l1 1" fill="none" stroke="#333" stroke-width="1.05"/><path d="M4.4 2.4h4.5l3 3v7.4H4.4z" fill="#fff" stroke="#333" stroke-width="1.05"/><path d="M8.9 2.4v3.1h3" fill="none" stroke="#333" stroke-width="1"/></svg></div><div class="abs" style="left:146px;top:12px;width:30px;height:15px;border-radius:8px;background:#22c52c;box-shadow:1px 1px 3px rgba(0,0,0,.12)"></div><div class="abs" style="left:160px;top:13.5px;width:12px;height:12px;border-radius:6px;background:#fff"></div><div class="c" style="left:189px;top:12px;color:#555">Active</div><div class="abs" style="left:276px;top:15px;width:8px;height:8px;border-radius:4px;background:#f4622a"></div><div class="c" style="left:291px;top:11px;color:#222">High</div><div class="c" style="left:396px;top:12px;color:#222">Office 365 Secure Score - Admin ...</div><div class="c" style="left:621px;top:10px;color:#14a8cc;font-size:14px;line-height:16px;-webkit-text-stroke:0.25px #14a8cc">455</div><div class="c" style="left:726px;top:12px;color:#222">-</div><div class="c" style="left:961px;top:12px;color:#222">-</div><div class="c" style="left:1139px;top:12px;color:#222">Create a single alert by grouping a...</div><div class="c" style="left:1365px;top:12px;color:#222">No Limit</div></div><div class="row" style="top:494px;height:38px"><div class="abs" style="left:136px;top:0;width:1px;height:38px;background:#efefef"></div><div class="abs" style="left:137px;top:0;width:5px;height:38px;background:linear-gradient(90deg,rgba(0,0,0,.035),rgba(0,0,0,0))"></div><div class="abs" style="left:19px;top:12px"><svg width="12" height="12" viewBox="0 0 12 12" ><path d="M0.3 10.9L2.7 10.56 8.64 4.62 6.38 2.36 0.44 8.3z" fill="#1e1e1e"/><path d="M9.35 3.91L11.19 2.07 8.93-0.19 7.09 1.65z" fill="#1e1e1e"/></svg></div><div class="abs" style="left:47px;top:10px"><svg width="12" height="14" viewBox="0 0 12 14" ><path d="M4.6 2.2V0.9h3.3v1.3" fill="none" stroke="#333" stroke-width="1.1"/><path d="M0.7 2.6h10.4" stroke="#555" stroke-width="1.3"/><path d="M1.6 3.2v8.7c0 .5.4.9.9.9h7.2c.5 0 .9-.4.9-.9V3.2" fill="none" stroke="#444" stroke-width="1.1"/><path d="M4.6 4.5v6.2M6.1 4.5v6.2M7.6 4.5v6.2" stroke="#777" stroke-width="1"/></svg></div><div class="abs" style="left:76px;top:10px"><svg width="13" height="14" viewBox="0 0 13 14" ><path d="M4.3 10.7H1V0.6h5.7l1 1" fill="none" stroke="#333" stroke-width="1.05"/><path d="M4.4 2.4h4.5l3 3v7.4H4.4z" fill="#fff" stroke="#333" stroke-width="1.05"/><path d="M8.9 2.4v3.1h3" fill="none" stroke="#333" stroke-width="1"/></svg></div><div class="abs" style="left:146px;top:11px;width:30px;height:15px;border-radius:8px;background:#22c52c;box-shadow:1px 1px 3px rgba(0,0,0,.12)"></div><div class="abs" style="left:160px;top:12.5px;width:12px;height:12px;border-radius:6px;background:#fff"></div><div class="c" style="left:189px;top:11px;color:#555">Active</div><div class="abs" style="left:276px;top:14px;width:8px;height:8px;border-radius:4px;background:#e8303f"></div><div class="c" style="left:291px;top:10px;color:#222">Severe</div><div class="c" style="left:396px;top:11px;color:#222">All User Sign-Ins with Location D...</div><div class="c" style="left:621px;top:9px;color:#14a8cc;font-size:14px;line-height:16px;-webkit-text-stroke:0.25px #14a8cc">-</div><div class="c" style="left:726px;top:11px;color:#222">-</div><div class="c" style="left:961px;top:11px;color:#222">-</div><div class="c" style="left:1139px;top:11px;color:#222">When the number of Sign-Ins for t...</div><div class="c" style="left:1365px;top:11px;color:#222">24</div></div><div class="row" style="top:532px;height:37px"><div class="abs" style="left:136px;top:0;width:1px;height:37px;background:#efefef"></div><div class="abs" style="left:137px;top:0;width:5px;height:37px;background:linear-gradient(90deg,rgba(0,0,0,.035),rgba(0,0,0,0))"></div><div class="abs" style="left:19px;top:12px"><svg width="12" height="12" viewBox="0 0 12 12" ><path d="M0.3 10.9L2.7 10.56 8.64 4.62 6.38 2.36 0.44 8.3z" fill="#1e1e1e"/><path d="M9.35 3.91L11.19 2.07 8.93-0.19 7.09 1.65z" fill="#1e1e1e"/></svg></div><div class="abs" style="left:47px;top:10px"><svg width="12" height="14" viewBox="0 0 12 14" ><path d="M4.6 2.2V0.9h3.3v1.3" fill="none" stroke="#333" stroke-width="1.1"/><path d="M0.7 2.6h10.4" stroke="#555" stroke-width="1.3"/><path d="M1.6 3.2v8.7c0 .5.4.9.9.9h7.2c.5 0 .9-.4.9-.9V3.2" fill="none" stroke="#444" stroke-width="1.1"/><path d="M4.6 4.5v6.2M6.1 4.5v6.2M7.6 4.5v6.2" stroke="#777" stroke-width="1"/></svg></div><div class="abs" style="left:76px;top:10px"><svg width="13" height="14" viewBox="0 0 13 14" ><path d="M4.3 10.7H1V0.6h5.7l1 1" fill="none" stroke="#333" stroke-width="1.05"/><path d="M4.4 2.4h4.5l3 3v7.4H4.4z" fill="#fff" stroke="#333" stroke-width="1.05"/><path d="M8.9 2.4v3.1h3" fill="none" stroke="#333" stroke-width="1"/></svg></div><div class="abs" style="left:146px;top:12px;width:30px;height:15px;border-radius:8px;background:#22c52c;box-shadow:1px 1px 3px rgba(0,0,0,.12)"></div><div class="abs" style="left:160px;top:13.5px;width:12px;height:12px;border-radius:6px;background:#fff"></div><div class="c" style="left:189px;top:12px;color:#555">Active</div><div class="abs" style="left:276px;top:15px;width:8px;height:8px;border-radius:4px;background:#e8303f"></div><div class="c" style="left:291px;top:11px;color:#222">Severe</div><div class="c" style="left:396px;top:12px;color:#222">All Mailsasass</div><div class="c" style="left:621px;top:10px;color:#14a8cc;font-size:14px;line-height:16px;-webkit-text-stroke:0.25px #14a8cc">27</div><div class="c" style="left:726px;top:12px;color:#222">-</div><div class="c" style="left:961px;top:12px;color:#222">-</div><div class="c" style="left:1139px;top:12px;color:#222">Create a single alert by grouping a...</div><div class="c" style="left:1365px;top:12px;color:#222">-</div></div><div class="row" style="top:569px;height:38px"><div class="abs" style="left:136px;top:0;width:1px;height:38px;background:#efefef"></div><div class="abs" style="left:137px;top:0;width:5px;height:38px;background:linear-gradient(90deg,rgba(0,0,0,.035),rgba(0,0,0,0))"></div><div class="abs" style="left:19px;top:14px"><svg width="12" height="12" viewBox="0 0 12 12" ><path d="M0.3 10.9L2.7 10.56 8.64 4.62 6.38 2.36 0.44 8.3z" fill="#1e1e1e"/><path d="M9.35 3.91L11.19 2.07 8.93-0.19 7.09 1.65z" fill="#1e1e1e"/></svg></div><div class="abs" style="left:47px;top:12px"><svg width="12" height="14" viewBox="0 0 12 14" ><path d="M4.6 2.2V0.9h3.3v1.3" fill="none" stroke="#333" stroke-width="1.1"/><path d="M0.7 2.6h10.4" stroke="#555" stroke-width="1.3"/><path d="M1.6 3.2v8.7c0 .5.4.9.9.9h7.2c.5 0 .9-.4.9-.9V3.2" fill="none" stroke="#444" stroke-width="1.1"/><path d="M4.6 4.5v6.2M6.1 4.5v6.2M7.6 4.5v6.2" stroke="#777" stroke-width="1"/></svg></div><div class="abs" style="left:76px;top:12px"><svg width="13" height="14" viewBox="0 0 13 14" ><path d="M4.3 10.7H1V0.6h5.7l1 1" fill="none" stroke="#333" stroke-width="1.05"/><path d="M4.4 2.4h4.5l3 3v7.4H4.4z" fill="#fff" stroke="#333" stroke-width="1.05"/><path d="M8.9 2.4v3.1h3" fill="none" stroke="#333" stroke-width="1"/></svg></div><div class="abs" style="left:146px;top:13px;width:30px;height:15px;border-radius:8px;background:#22c52c;box-shadow:1px 1px 3px rgba(0,0,0,.12)"></div><div class="abs" style="left:160px;top:14.5px;width:12px;height:12px;border-radius:6px;background:#fff"></div><div class="c" style="left:189px;top:13px;color:#555">Active</div><div class="abs" style="left:276px;top:16px;width:8px;height:8px;border-radius:4px;background:#e8303f"></div><div class="c" style="left:291px;top:12px;color:#222">Severe</div><div class="c" style="left:396px;top:13px;color:#222">Alert Policy by Demo User11</div><div class="c" style="left:621px;top:11px;color:#14a8cc;font-size:14px;line-height:16px;-webkit-text-stroke:0.25px #14a8cc">12</div><div class="c" style="left:726px;top:13px;color:#222">-</div><div class="c" style="left:961px;top:13px;color:#222">-</div><div class="c" style="left:1139px;top:13px;color:#222">Create a single alert by grouping a...</div><div class="c" style="left:1365px;top:13px;color:#222">No Limit</div></div><div class="row" style="top:607px;height:39px"><div class="abs" style="left:136px;top:0;width:1px;height:39px;background:#efefef"></div><div class="abs" style="left:137px;top:0;width:5px;height:39px;background:linear-gradient(90deg,rgba(0,0,0,.035),rgba(0,0,0,0))"></div><div class="abs" style="left:19px;top:12px"><svg width="12" height="12" viewBox="0 0 12 12" ><path d="M0.3 10.9L2.7 10.56 8.64 4.62 6.38 2.36 0.44 8.3z" fill="#1e1e1e"/><path d="M9.35 3.91L11.19 2.07 8.93-0.19 7.09 1.65z" fill="#1e1e1e"/></svg></div><div class="abs" style="left:47px;top:10px"><svg width="12" height="14" viewBox="0 0 12 14" ><path d="M4.6 2.2V0.9h3.3v1.3" fill="none" stroke="#333" stroke-width="1.1"/><path d="M0.7 2.6h10.4" stroke="#555" stroke-width="1.3"/><path d="M1.6 3.2v8.7c0 .5.4.9.9.9h7.2c.5 0 .9-.4.9-.9V3.2" fill="none" stroke="#444" stroke-width="1.1"/><path d="M4.6 4.5v6.2M6.1 4.5v6.2M7.6 4.5v6.2" stroke="#777" stroke-width="1"/></svg></div><div class="abs" style="left:76px;top:10px"><svg width="13" height="14" viewBox="0 0 13 14" ><path d="M4.3 10.7H1V0.6h5.7l1 1" fill="none" stroke="#333" stroke-width="1.05"/><path d="M4.4 2.4h4.5l3 3v7.4H4.4z" fill="#fff" stroke="#333" stroke-width="1.05"/><path d="M8.9 2.4v3.1h3" fill="none" stroke="#333" stroke-width="1"/></svg></div><div class="abs" style="left:146px;top:12px;width:30px;height:15px;border-radius:8px;background:#22c52c;box-shadow:1px 1px 3px rgba(0,0,0,.12)"></div><div class="abs" style="left:160px;top:13.5px;width:12px;height:12px;border-radius:6px;background:#fff"></div><div class="c" style="left:189px;top:12px;color:#555">Active</div><div class="abs" style="left:276px;top:15px;width:8px;height:8px;border-radius:4px;background:#0e8a0e"></div><div class="c" style="left:291px;top:11px;color:#222">Low</div><div class="c" style="left:396px;top:12px;color:#222">external forwadred</div><div class="c" style="left:621px;top:10px;color:#14a8cc;font-size:14px;line-height:16px;-webkit-text-stroke:0.25px #14a8cc">-</div><div class="c" style="left:726px;top:12px;color:#222">-</div><div class="abs" style="left:961px;top:5px;width:139px;height:22px;background:#f4f4f4;border-radius:4px"><div class="abs" style="left:5px;top:6px;width:12px;height:12px;border-radius:3px;background:#8e2fb0"></div><div class="c" style="left:23px;top:6.5px;font-size:11px;line-height:13px;color:#1e1e1e;-webkit-text-stroke:0.2px #1e1e1e">Configuration changes</div></div><div class="c" style="left:1139px;top:12px;color:#222">Create a single alert by grouping a...</div><div class="c" style="left:1365px;top:12px;color:#222">24</div></div><div class="row" style="top:646px;height:39px"><div class="abs" style="left:136px;top:0;width:1px;height:39px;background:#efefef"></div><div class="abs" style="left:137px;top:0;width:5px;height:39px;background:linear-gradient(90deg,rgba(0,0,0,.035),rgba(0,0,0,0))"></div><div class="abs" style="left:19px;top:13px"><svg width="12" height="12" viewBox="0 0 12 12" ><path d="M0.3 10.9L2.7 10.56 8.64 4.62 6.38 2.36 0.44 8.3z" fill="#1e1e1e"/><path d="M9.35 3.91L11.19 2.07 8.93-0.19 7.09 1.65z" fill="#1e1e1e"/></svg></div><div class="abs" style="left:47px;top:11px"><svg width="12" height="14" viewBox="0 0 12 14" ><path d="M4.6 2.2V0.9h3.3v1.3" fill="none" stroke="#333" stroke-width="1.1"/><path d="M0.7 2.6h10.4" stroke="#555" stroke-width="1.3"/><path d="M1.6 3.2v8.7c0 .5.4.9.9.9h7.2c.5 0 .9-.4.9-.9V3.2" fill="none" stroke="#444" stroke-width="1.1"/><path d="M4.6 4.5v6.2M6.1 4.5v6.2M7.6 4.5v6.2" stroke="#777" stroke-width="1"/></svg></div><div class="abs" style="left:76px;top:11px"><svg width="13" height="14" viewBox="0 0 13 14" ><path d="M4.3 10.7H1V0.6h5.7l1 1" fill="none" stroke="#333" stroke-width="1.05"/><path d="M4.4 2.4h4.5l3 3v7.4H4.4z" fill="#fff" stroke="#333" stroke-width="1.05"/><path d="M8.9 2.4v3.1h3" fill="none" stroke="#333" stroke-width="1"/></svg></div><div class="abs" style="left:146px;top:13px;width:30px;height:15px;border-radius:8px;background:#22c52c;box-shadow:1px 1px 3px rgba(0,0,0,.12)"></div><div class="abs" style="left:160px;top:14.5px;width:12px;height:12px;border-radius:6px;background:#fff"></div><div class="c" style="left:189px;top:13px;color:#555">Active</div><div class="abs" style="left:276px;top:16px;width:8px;height:8px;border-radius:4px;background:#e8303f"></div><div class="c" style="left:291px;top:12px;color:#222">Severe</div><div class="c" style="left:396px;top:13px;color:#222">Downloaded SharePoint Files test</div><div class="c" style="left:621px;top:11px;color:#14a8cc;font-size:14px;line-height:16px;-webkit-text-stroke:0.25px #14a8cc">-</div><div class="c" style="left:726px;top:13px;color:#222">-</div><div class="c" style="left:961px;top:13px;color:#222">-</div><div class="c" style="left:1139px;top:13px;color:#222">When more than 10 new SharePoi...</div><div class="c" style="left:1365px;top:13px;color:#222">24</div></div><div class="row" style="top:685px;height:40px"><div class="abs" style="left:136px;top:0;width:1px;height:40px;background:#efefef"></div><div class="abs" style="left:137px;top:0;width:5px;height:40px;background:linear-gradient(90deg,rgba(0,0,0,.035),rgba(0,0,0,0))"></div><div class="abs" style="left:19px;top:14px"><svg width="12" height="12" viewBox="0 0 12 12" ><path d="M0.3 10.9L2.7 10.56 8.64 4.62 6.38 2.36 0.44 8.3z" fill="#1e1e1e"/><path d="M9.35 3.91L11.19 2.07 8.93-0.19 7.09 1.65z" fill="#1e1e1e"/></svg></div><div class="abs" style="left:47px;top:12px"><svg width="12" height="14" viewBox="0 0 12 14" ><path d="M4.6 2.2V0.9h3.3v1.3" fill="none" stroke="#333" stroke-width="1.1"/><path d="M0.7 2.6h10.4" stroke="#555" stroke-width="1.3"/><path d="M1.6 3.2v8.7c0 .5.4.9.9.9h7.2c.5 0 .9-.4.9-.9V3.2" fill="none" stroke="#444" stroke-width="1.1"/><path d="M4.6 4.5v6.2M6.1 4.5v6.2M7.6 4.5v6.2" stroke="#777" stroke-width="1"/></svg></div><div class="abs" style="left:76px;top:12px"><svg width="13" height="14" viewBox="0 0 13 14" ><path d="M4.3 10.7H1V0.6h5.7l1 1" fill="none" stroke="#333" stroke-width="1.05"/><path d="M4.4 2.4h4.5l3 3v7.4H4.4z" fill="#fff" stroke="#333" stroke-width="1.05"/><path d="M8.9 2.4v3.1h3" fill="none" stroke="#333" stroke-width="1"/></svg></div><div class="abs" style="left:146px;top:13px;width:30px;height:15px;border-radius:8px;background:#22c52c;box-shadow:1px 1px 3px rgba(0,0,0,.12)"></div><div class="abs" style="left:160px;top:14.5px;width:12px;height:12px;border-radius:6px;background:#fff"></div><div class="c" style="left:189px;top:13px;color:#555">Active</div><div class="abs" style="left:276px;top:16px;width:8px;height:8px;border-radius:4px;background:#e8a23a"></div><div class="c" style="left:291px;top:12px;color:#222">Medium</div><div class="c" style="left:396px;top:13px;color:#222">Alert Policy by Demo User_v3</div><div class="c" style="left:621px;top:11px;color:#14a8cc;font-size:14px;line-height:16px;-webkit-text-stroke:0.25px #14a8cc">143</div><div class="c" style="left:726px;top:13px;color:#222">-</div><div class="abs" style="left:961px;top:6px;width:139px;height:22px;background:#f4f4f4;border-radius:4px"><div class="abs" style="left:5px;top:6px;width:12px;height:12px;border-radius:3px;background:#8e2fb0"></div><div class="c" style="left:23px;top:6.5px;font-size:11px;line-height:13px;color:#1e1e1e;-webkit-text-stroke:0.2px #1e1e1e">Configuration changes</div></div><div class="c" style="left:1139px;top:13px;color:#222">Create separate alert for each new...</div><div class="c" style="left:1365px;top:13px;color:#222">No Limit</div></div><div class="row" style="top:725px;height:39px"><div class="abs" style="left:136px;top:0;width:1px;height:39px;background:#efefef"></div><div class="abs" style="left:137px;top:0;width:5px;height:39px;background:linear-gradient(90deg,rgba(0,0,0,.035),rgba(0,0,0,0))"></div><div class="abs" style="left:19px;top:12px"><svg width="12" height="12" viewBox="0 0 12 12" ><path d="M0.3 10.9L2.7 10.56 8.64 4.62 6.38 2.36 0.44 8.3z" fill="#1e1e1e"/><path d="M9.35 3.91L11.19 2.07 8.93-0.19 7.09 1.65z" fill="#1e1e1e"/></svg></div><div class="abs" style="left:47px;top:10px"><svg width="12" height="14" viewBox="0 0 12 14" ><path d="M4.6 2.2V0.9h3.3v1.3" fill="none" stroke="#333" stroke-width="1.1"/><path d="M0.7 2.6h10.4" stroke="#555" stroke-width="1.3"/><path d="M1.6 3.2v8.7c0 .5.4.9.9.9h7.2c.5 0 .9-.4.9-.9V3.2" fill="none" stroke="#444" stroke-width="1.1"/><path d="M4.6 4.5v6.2M6.1 4.5v6.2M7.6 4.5v6.2" stroke="#777" stroke-width="1"/></svg></div><div class="abs" style="left:76px;top:10px"><svg width="13" height="14" viewBox="0 0 13 14" ><path d="M4.3 10.7H1V0.6h5.7l1 1" fill="none" stroke="#333" stroke-width="1.05"/><path d="M4.4 2.4h4.5l3 3v7.4H4.4z" fill="#fff" stroke="#333" stroke-width="1.05"/><path d="M8.9 2.4v3.1h3" fill="none" stroke="#333" stroke-width="1"/></svg></div><div class="abs" style="left:146px;top:12px;width:30px;height:15px;border-radius:8px;background:#22c52c;box-shadow:1px 1px 3px rgba(0,0,0,.12)"></div><div class="abs" style="left:160px;top:13.5px;width:12px;height:12px;border-radius:6px;background:#fff"></div><div class="c" style="left:189px;top:12px;color:#555">Active</div><div class="abs" style="left:276px;top:15px;width:8px;height:8px;border-radius:4px;background:#f4622a"></div><div class="c" style="left:291px;top:11px;color:#222">High</div><div class="c" style="left:396px;top:12px;color:#222">storage test 2 onedrive</div><div class="c" style="left:621px;top:10px;color:#14a8cc;font-size:14px;line-height:16px;-webkit-text-stroke:0.25px #14a8cc">-</div><div class="c" style="left:726px;top:12px;color:#222">-</div><div class="c" style="left:961px;top:12px;color:#222">-</div><div class="c" style="left:1139px;top:12px;color:#222">Create a single alert by grouping a...</div><div class="c" style="left:1365px;top:12px;color:#222">1</div></div><div class="row" style="top:764px;height:39px"><div class="abs" style="left:136px;top:0;width:1px;height:39px;background:#efefef"></div><div class="abs" style="left:137px;top:0;width:5px;height:39px;background:linear-gradient(90deg,rgba(0,0,0,.035),rgba(0,0,0,0))"></div><div class="abs" style="left:19px;top:12px"><svg width="12" height="12" viewBox="0 0 12 12" ><path d="M0.3 10.9L2.7 10.56 8.64 4.62 6.38 2.36 0.44 8.3z" fill="#1e1e1e"/><path d="M9.35 3.91L11.19 2.07 8.93-0.19 7.09 1.65z" fill="#1e1e1e"/></svg></div><div class="abs" style="left:47px;top:10px"><svg width="12" height="14" viewBox="0 0 12 14" ><path d="M4.6 2.2V0.9h3.3v1.3" fill="none" stroke="#333" stroke-width="1.1"/><path d="M0.7 2.6h10.4" stroke="#555" stroke-width="1.3"/><path d="M1.6 3.2v8.7c0 .5.4.9.9.9h7.2c.5 0 .9-.4.9-.9V3.2" fill="none" stroke="#444" stroke-width="1.1"/><path d="M4.6 4.5v6.2M6.1 4.5v6.2M7.6 4.5v6.2" stroke="#777" stroke-width="1"/></svg></div><div class="abs" style="left:76px;top:10px"><svg width="13" height="14" viewBox="0 0 13 14" ><path d="M4.3 10.7H1V0.6h5.7l1 1" fill="none" stroke="#333" stroke-width="1.05"/><path d="M4.4 2.4h4.5l3 3v7.4H4.4z" fill="#fff" stroke="#333" stroke-width="1.05"/><path d="M8.9 2.4v3.1h3" fill="none" stroke="#333" stroke-width="1"/></svg></div><div class="abs" style="left:146px;top:12px;width:30px;height:15px;border-radius:8px;background:#22c52c;box-shadow:1px 1px 3px rgba(0,0,0,.12)"></div><div class="abs" style="left:160px;top:13.5px;width:12px;height:12px;border-radius:6px;background:#fff"></div><div class="c" style="left:189px;top:12px;color:#555">Active</div><div class="abs" style="left:276px;top:15px;width:8px;height:8px;border-radius:4px;background:#f4622a"></div><div class="c" style="left:291px;top:11px;color:#222">High</div><div class="c" style="left:396px;top:12px;color:#222">Storage onedrive test</div><div class="c" style="left:621px;top:10px;color:#14a8cc;font-size:14px;line-height:16px;-webkit-text-stroke:0.25px #14a8cc">122</div><div class="c" style="left:726px;top:12px;color:#222">-</div><div class="c" style="left:961px;top:12px;color:#222">-</div><div class="c" style="left:1139px;top:12px;color:#222">Create a single alert by grouping a...</div><div class="c" style="left:1365px;top:12px;color:#222">No Limit</div></div><div class="row" style="top:803px;height:41px"><div class="abs" style="left:136px;top:0;width:1px;height:41px;background:#efefef"></div><div class="abs" style="left:137px;top:0;width:5px;height:41px;background:linear-gradient(90deg,rgba(0,0,0,.035),rgba(0,0,0,0))"></div><div class="abs" style="left:19px;top:14px"><svg width="12" height="12" viewBox="0 0 12 12" ><path d="M0.3 10.9L2.7 10.56 8.64 4.62 6.38 2.36 0.44 8.3z" fill="#1e1e1e"/><path d="M9.35 3.91L11.19 2.07 8.93-0.19 7.09 1.65z" fill="#1e1e1e"/></svg></div><div class="abs" style="left:47px;top:12px"><svg width="12" height="14" viewBox="0 0 12 14" ><path d="M4.6 2.2V0.9h3.3v1.3" fill="none" stroke="#333" stroke-width="1.1"/><path d="M0.7 2.6h10.4" stroke="#555" stroke-width="1.3"/><path d="M1.6 3.2v8.7c0 .5.4.9.9.9h7.2c.5 0 .9-.4.9-.9V3.2" fill="none" stroke="#444" stroke-width="1.1"/><path d="M4.6 4.5v6.2M6.1 4.5v6.2M7.6 4.5v6.2" stroke="#777" stroke-width="1"/></svg></div><div class="abs" style="left:76px;top:12px"><svg width="13" height="14" viewBox="0 0 13 14" ><path d="M4.3 10.7H1V0.6h5.7l1 1" fill="none" stroke="#333" stroke-width="1.05"/><path d="M4.4 2.4h4.5l3 3v7.4H4.4z" fill="#fff" stroke="#333" stroke-width="1.05"/><path d="M8.9 2.4v3.1h3" fill="none" stroke="#333" stroke-width="1"/></svg></div><div class="abs" style="left:146px;top:14px;width:30px;height:15px;border-radius:8px;background:#22c52c;box-shadow:1px 1px 3px rgba(0,0,0,.12)"></div><div class="abs" style="left:160px;top:15.5px;width:12px;height:12px;border-radius:6px;background:#fff"></div><div class="c" style="left:189px;top:14px;color:#555">Active</div><div class="abs" style="left:276px;top:17px;width:8px;height:8px;border-radius:4px;background:#f4622a"></div><div class="c" style="left:291px;top:13px;color:#222">High</div><div class="c" style="left:396px;top:14px;color:#222">Elevation of Global admin privileg...</div><div class="c" style="left:621px;top:12px;color:#14a8cc;font-size:14px;line-height:16px;-webkit-text-stroke:0.25px #14a8cc">5</div><div class="c" style="left:726px;top:14px;color:#222">Creates an alert when a user is add...</div><div class="abs" style="left:961px;top:7px;width:82px;height:22px;background:#f4f4f4;border-radius:4px"><div class="abs" style="left:5px;top:6px;width:12px;height:12px;border-radius:3px;background:#e5940f"></div><div class="c" style="left:23px;top:6.5px;font-size:11px;line-height:13px;color:#1e1e1e;-webkit-text-stroke:0.2px #1e1e1e">Permission</div></div><div class="c" style="left:1139px;top:14px;color:#222">Create a single alert by grouping a...</div><div class="c" style="left:1365px;top:14px;color:#222">24</div></div><div class="row" style="top:844px;height:40px"><div class="abs" style="left:136px;top:0;width:1px;height:40px;background:#efefef"></div><div class="abs" style="left:137px;top:0;width:5px;height:40px;background:linear-gradient(90deg,rgba(0,0,0,.035),rgba(0,0,0,0))"></div><div class="abs" style="left:19px;top:13px"><svg width="12" height="12" viewBox="0 0 12 12" ><path d="M0.3 10.9L2.7 10.56 8.64 4.62 6.38 2.36 0.44 8.3z" fill="#1e1e1e"/><path d="M9.35 3.91L11.19 2.07 8.93-0.19 7.09 1.65z" fill="#1e1e1e"/></svg></div><div class="abs" style="left:47px;top:11px"><svg width="12" height="14" viewBox="0 0 12 14" ><path d="M4.6 2.2V0.9h3.3v1.3" fill="none" stroke="#333" stroke-width="1.1"/><path d="M0.7 2.6h10.4" stroke="#555" stroke-width="1.3"/><path d="M1.6 3.2v8.7c0 .5.4.9.9.9h7.2c.5 0 .9-.4.9-.9V3.2" fill="none" stroke="#444" stroke-width="1.1"/><path d="M4.6 4.5v6.2M6.1 4.5v6.2M7.6 4.5v6.2" stroke="#777" stroke-width="1"/></svg></div><div class="abs" style="left:76px;top:11px"><svg width="13" height="14" viewBox="0 0 13 14" ><path d="M4.3 10.7H1V0.6h5.7l1 1" fill="none" stroke="#333" stroke-width="1.05"/><path d="M4.4 2.4h4.5l3 3v7.4H4.4z" fill="#fff" stroke="#333" stroke-width="1.05"/><path d="M8.9 2.4v3.1h3" fill="none" stroke="#333" stroke-width="1"/></svg></div><div class="abs" style="left:146px;top:12px;width:30px;height:15px;border-radius:8px;background:#22c52c;box-shadow:1px 1px 3px rgba(0,0,0,.12)"></div><div class="abs" style="left:160px;top:13.5px;width:12px;height:12px;border-radius:6px;background:#fff"></div><div class="c" style="left:189px;top:12px;color:#555">Active</div><div class="abs" style="left:276px;top:16px;width:8px;height:8px;border-radius:4px;background:#e8a23a"></div><div class="c" style="left:291px;top:11px;color:#222">Medium</div><div class="c" style="left:396px;top:12px;color:#222">Storage Alert Policy by Demo User...</div><div class="c" style="left:621px;top:10px;color:#14a8cc;font-size:14px;line-height:16px;-webkit-text-stroke:0.25px #14a8cc">80</div><div class="c" style="left:726px;top:12px;color:#222">-</div><div class="c" style="left:961px;top:12px;color:#222">-</div><div class="c" style="left:1139px;top:12px;color:#222">Create a single alert by grouping a...</div><div class="c" style="left:1365px;top:12px;color:#222">24</div></div></body></html>
